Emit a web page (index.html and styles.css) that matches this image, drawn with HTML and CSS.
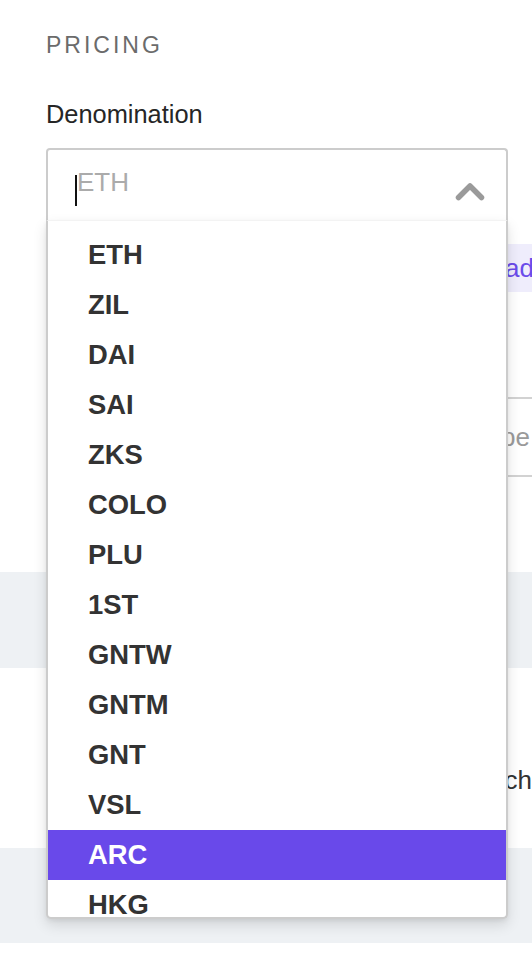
FILE: index.html
```html
<!DOCTYPE html>
<html lang="en">
<head>
<meta charset="utf-8">
<title>Pricing</title>
<link rel="stylesheet" href="styles.css">
</head>
<body>
<div class="page">
  <div class="form">
    <h2 class="section-title">PRICING</h2>
    <div class="label">Denomination</div>
    <div class="select">
      <div class="select-control">
        <span class="caret"></span>
        <span class="select-value">ETH</span>
        <svg class="chevron" width="32" height="26" viewBox="0 0 32 26" aria-hidden="true">
          <path d="M4.5 19.5 L16 8 L27.5 19.5" fill="none" stroke="#9a9a9a" stroke-width="5.5" stroke-linecap="round" stroke-linejoin="round"/>
        </svg>
      </div>
      <ul class="menu">
        <li class="option">ETH</li>
        <li class="option">ZIL</li>
        <li class="option">DAI</li>
        <li class="option">SAI</li>
        <li class="option">ZKS</li>
        <li class="option">COLO</li>
        <li class="option">PLU</li>
        <li class="option">1ST</li>
        <li class="option">GNTW</li>
        <li class="option">GNTM</li>
        <li class="option">GNT</li>
        <li class="option">VSL</li>
        <li class="option is-active">ARC</li>
        <li class="option">HKG</li>
      </ul>
    </div>
    <div class="tag-row"><span class="tag">Upload</span></div>
    <div class="field"><span class="placeholder">Asset type</span></div>
  </div>
  <div class="band"></div>
  <div class="panel"><span class="panel-text">Search</span></div>
  <div class="band band-last"></div>
</div>
</body>
</html>
```
FILE: styles.css
```css
html, body {
  margin: 0;
  padding: 0;
  background: #ffffff;
  overflow: hidden;
}

body {
  font-family: "Liberation Sans", Arial, sans-serif;
  color: #333333;
}

.page {
  width: 100%;
}

.form {
  padding: 31px 0 0 46px;
}

.section-title {
  margin: 0;
  font-size: 23px;
  line-height: 28px;
  font-weight: 400;
  letter-spacing: 3px;
  color: #6b6b6b;
}

.label {
  margin-top: 41px;
  font-size: 25.4px;
  line-height: 28px;
  color: #262626;
}

.select {
  position: relative;
  margin-top: 20px;
  width: 462px;
  z-index: 5;
}

.select-control {
  box-sizing: border-box;
  height: 72px;
  border: 2px solid #cccccc;
  border-bottom: none;
  border-radius: 4px 4px 0 0;
  background: #ffffff;
  display: flex;
  align-items: center;
  padding: 0 20px 6px 27px;
}

.caret {
  width: 2px;
  height: 31px;
  background: #111111;
  margin-top: 17px;
}

.select-value {
  font-size: 26px;
  line-height: 30px;
  color: #ababab;
}

.chevron {
  margin-left: auto;
  margin-top: 18px;
  display: block;
}

.menu {
  position: absolute;
  top: 100%;
  left: 0;
  right: 0;
  box-sizing: border-box;
  height: 699px;
  margin: 0;
  padding: 9px 0 0;
  list-style: none;
  background: #ffffff;
  border: 2px solid #cccccc;
  border-top: 1px solid #f3f3f3;
  border-radius: 0 0 5px 5px;
  overflow: hidden;
  box-shadow: 0 6px 14px rgba(0, 0, 0, 0.12), 0 2px 4px rgba(0, 0, 0, 0.06);
}

.option {
  height: 50px;
  line-height: 50px;
  padding-left: 40px;
  font-size: 27.4px;
  font-weight: 700;
  color: #333333;
}

.option.is-active {
  background: #6949ea;
  color: #ffffff;
}

.tag-row {
  margin-top: 24px;
  margin-right: -2px;
  display: flex;
  justify-content: flex-end;
}

.tag {
  height: 48px;
  line-height: 48px;
  padding: 0 0 0 14px;
  background: #efedfc;
  color: #6a4bea;
  font-size: 26px;
}

.field {
  box-sizing: border-box;
  margin-top: 105px;
  margin-right: -24px;
  height: 80px;
  border: 2px solid #d2d2d2;
  display: flex;
  align-items: center;
  justify-content: flex-end;
  padding-right: 24px;
}

.placeholder {
  font-size: 26px;
  line-height: 30px;
  color: #9a9a9a;
}

.band {
  margin-top: 95px;
  height: 96px;
  background: #eef1f4;
}

.band-last {
  margin-top: 0;
  height: 95px;
}

.panel {
  height: 180px;
  box-sizing: border-box;
  padding-top: 97px;
  display: flex;
  justify-content: flex-end;
  background: #ffffff;
}

.panel-text {
  font-size: 26px;
  line-height: 30px;
  color: #333333;
}
```
